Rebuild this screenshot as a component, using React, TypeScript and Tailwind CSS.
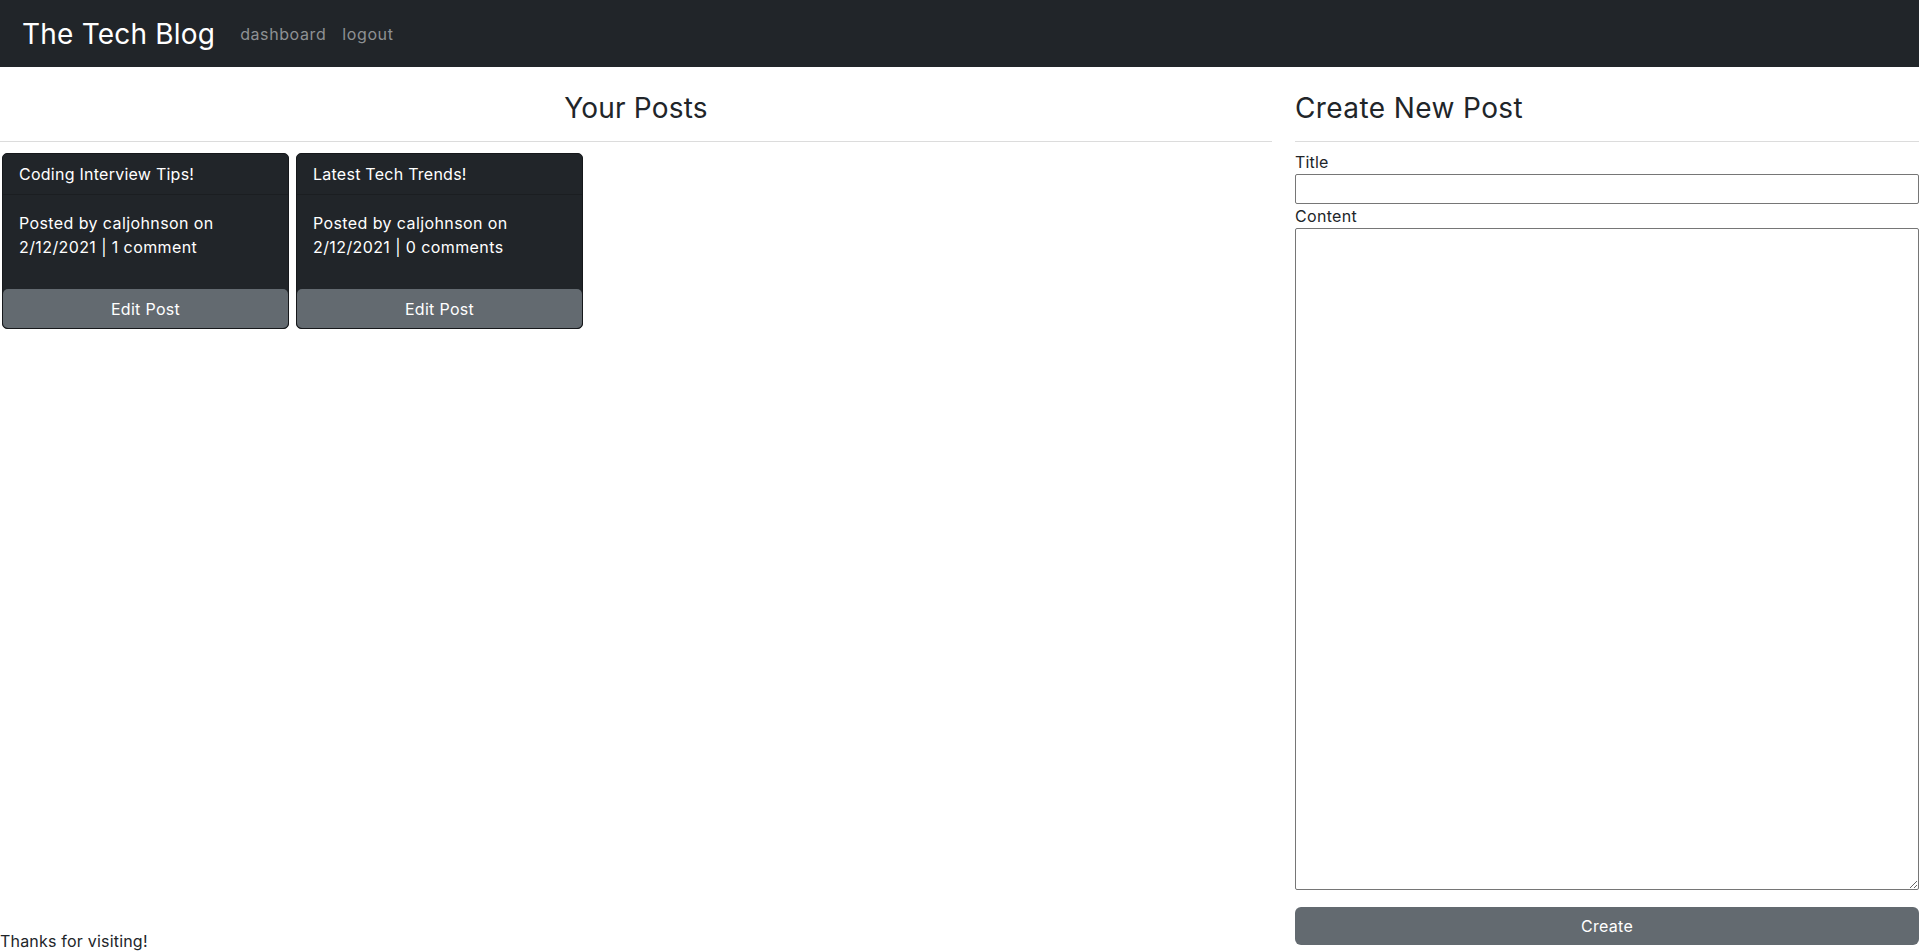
import React from 'react'

const posts = [
  { id: 1, title: 'Coding Interview Tips!', author: 'caljohnson', date: '2/12/2021', comments: '1 comment' },
  { id: 2, title: 'Latest Tech Trends!', author: 'caljohnson', date: '2/12/2021', comments: '0 comments' },
]

function PostCard({ post }: { post: (typeof posts)[number] }) {
  return (
    <div className="w-[287px] h-[176px] flex flex-col bg-[#212529] border border-[#16181b] rounded-[5px] text-white">
      <div className="h-[41px] px-4 flex items-center border-b border-[#1b1e21]">
        <span className="text-[16px] leading-6 tracking-[0.25px]">{post.title}</span>
      </div>
      <div className="flex-1 px-4 pt-[16px] text-[16px] leading-6 tracking-[0.4px]">
        Posted by {post.author} on {post.date} | {post.comments}
      </div>
      <button className="h-[39px] w-full bg-[#636a70] rounded-[5px] text-[16px] tracking-[0.3px] text-white">Edit Post</button>
    </div>
  )
}

export default function App() {
  return (
    <div className="h-[951px] flex flex-col bg-white text-[#212529] font-['Inter','Noto_Sans',sans-serif] overflow-hidden">
      {/* Navbar */}
      <nav className="h-[67px] shrink-0 bg-[#212529] flex items-center px-[22px]">
        <span className="text-[28px] text-white leading-none tracking-[0.2px]">The Tech Blog</span>
        <div className="flex items-center gap-[16px] ml-[25px] text-[16px] tracking-[0.6px] text-[#8e9194]">
          <a>dashboard</a>
          <a>logout</a>
        </div>
      </nav>

      <main className="flex-1 flex">
        {/* Your Posts */}
        <section className="w-[1272px] flex flex-col">
          <h2 className="mt-[24px] h-[34px] leading-[34px] text-[28px] tracking-[0.2px] text-center">Your Posts</h2>
          <hr className="mt-[16px] border-t border-[#dcdcdc]" />
          <div className="mt-[11px] pl-[2px] flex gap-[7px]">
            {posts.map((p) => (
              <PostCard key={p.id} post={p} />
            ))}
          </div>
          <footer className="mt-auto mb-[-2px] text-[16px] leading-6 tracking-[0.2px]">Thanks for visiting!</footer>
        </section>

        {/* Create New Post */}
        <section className="flex-1 ml-[23px] flex flex-col">
          <h2 className="mt-[24px] h-[34px] leading-[34px] text-[28px] tracking-[0.4px]">Create New Post</h2>
          <hr className="mt-[16px] border-t border-[#dcdcdc]" />
          <label className="mt-[8px] text-[16px] leading-6 tracking-[0.2px]">Title</label>
          <input className="h-[30px] w-full border border-[#767676] rounded-[2px]" />
          <label className="text-[16px] leading-6 tracking-[0.3px]">Content</label>
          <textarea className="h-[662px] w-full border border-[#767676] rounded-[2px]" />
          <button className="mt-[17px] h-[38px] w-full bg-[#636a70] rounded-[6px] text-white text-[16px] tracking-[0.3px]">Create</button>
        </section>
      </main>
    </div>
  )
}
